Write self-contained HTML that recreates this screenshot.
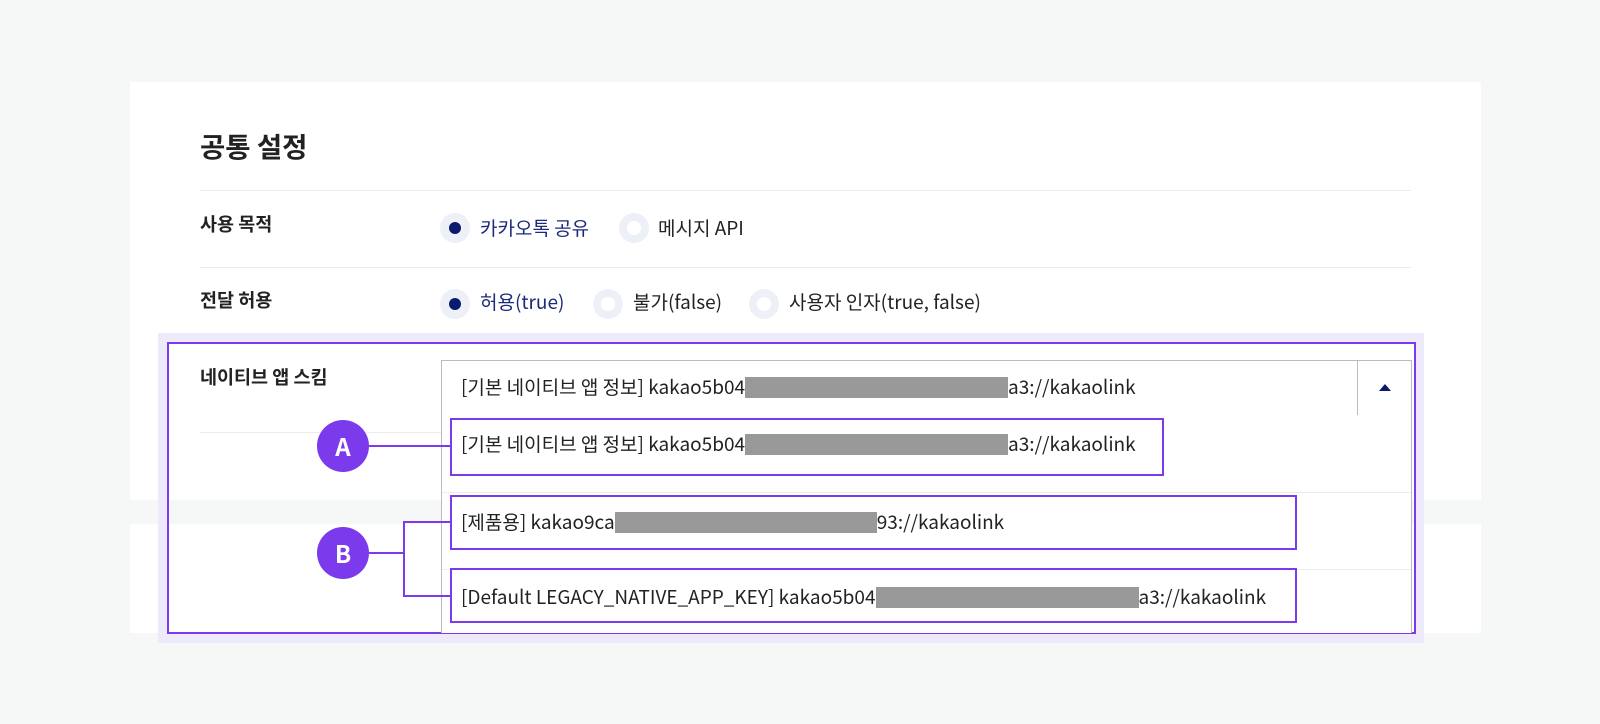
<!DOCTYPE html>
<html><head><meta charset="utf-8"><style>
*{margin:0;padding:0;box-sizing:border-box}
body{width:1600px;height:724px;background:#f6f7f7;position:relative;overflow:hidden;font-family:"Noto Sans CJK KR","Liberation Sans",sans-serif;color:#222}
.a{position:absolute}
.t{font-size:19px;white-space:nowrap;line-height:22px}
.g{display:inline-block;background:#999;height:21px;vertical-align:-4px}
.rad{position:absolute;width:30px;height:30px;border-radius:50%;background:#eef0f8}
.rad.on::after{content:"";position:absolute;left:9px;top:9px;width:12px;height:12px;border-radius:50%;background:#0c1a6b}
.rad:not(.on)::after{content:"";position:absolute;left:8px;top:8px;width:14px;height:14px;border-radius:50%;background:#fff}
.lbl{font-size:18.5px;font-weight:bold;line-height:22px}
.hl{height:1px;background:#ececec}
.pb{border:2px solid #7c3aed}
.circ{width:52px;height:52px;border-radius:50%;background:#7c3aed;color:#fff;font-weight:bold;font-size:24px;text-align:center;line-height:52px}
.ln{background:#7c3aed}
</style></head><body>
<div class="a" style="left:130px;top:82px;width:1351px;height:418px;background:#fff"></div>
<div class="a" style="left:130px;top:524px;width:1351px;height:109px;background:#fff"></div>
<div class="a" style="left:200px;top:128px;font-size:27.5px;font-weight:bold;line-height:34px">공통 설정</div>
<div class="a hl" style="left:200px;top:190px;width:1211px"></div>
<div class="a lbl" style="left:200px;top:213px">사용 목적</div>
<div class="rad on" style="left:440px;top:213px"></div>
<div class="a t" style="left:480px;top:217px;color:#1c2a7a">카카오톡 공유</div>
<div class="rad" style="left:619px;top:213px"></div>
<div class="a t" style="left:658px;top:217px">메시지 API</div>
<div class="a hl" style="left:200px;top:267px;width:1211px"></div>
<div class="a lbl" style="left:200px;top:289px">전달 허용</div>
<div class="rad on" style="left:440px;top:289px"></div>
<div class="a t" style="left:480px;top:291px;color:#1c2a7a">허용(true)</div>
<div class="rad" style="left:593px;top:289px"></div>
<div class="a t" style="left:633px;top:291px">불가(false)</div>
<div class="rad" style="left:749px;top:289px"></div>
<div class="a t" style="left:789px;top:291px">사용자 인자(true, false)</div>

<div class="a" style="left:158px;top:333px;width:1266px;height:310px;border:10px solid #efe9fc"></div>
<div class="a pb" style="left:167px;top:342px;width:1249px;height:292px"></div>
<div class="a lbl" style="left:200px;top:366px">네이티브 앱 스킴</div>
<div class="a hl" style="left:200px;top:432px;width:241px"></div>
<div class="a" style="left:441px;top:360px;width:971px;height:56px;border:1px solid #bbb;background:#fff"></div>
<div class="a" style="left:1357px;top:360px;width:1px;height:56px;background:#bbb"></div>
<div class="a" style="left:1379px;top:384px;width:0;height:0;border-left:6px solid transparent;border-right:6px solid transparent;border-bottom:7px solid #0c1a6b"></div>
<div class="a t" style="left:461px;top:376px">[기본 네이티브 앱 정보] kakao5b04<span class="g" style="width:263px"></span>a3://kakaolink</div>
<div class="a" style="left:441px;top:415px;width:971px;height:218px;border-left:1px solid #bbb;border-right:1px solid #bbb;background:#fff"></div>
<div class="a hl" style="left:442px;top:492px;width:969px"></div>
<div class="a hl" style="left:442px;top:569px;width:969px"></div>
<div class="a pb" style="left:450px;top:418px;width:714px;height:58px"></div>
<div class="a t" style="left:461px;top:433px">[기본 네이티브 앱 정보] kakao5b04<span class="g" style="width:263px"></span>a3://kakaolink</div>
<div class="a pb" style="left:450px;top:495px;width:847px;height:55px"></div>
<div class="a t" style="left:461px;top:511px">[제품용] kakao9ca<span class="g" style="width:262px"></span>93://kakaolink</div>
<div class="a pb" style="left:450px;top:568px;width:847px;height:55px"></div>
<div class="a t" style="left:461px;top:586px">[Default LEGACY_NATIVE_APP_KEY] kakao5b04<span class="g" style="width:263px"></span>a3://kakaolink</div>
<div class="a circ" style="left:317px;top:420px">A</div>
<div class="a ln" style="left:369px;top:445px;width:81px;height:2px"></div>
<div class="a circ" style="left:317px;top:527px">B</div>
<div class="a ln" style="left:369px;top:552px;width:36px;height:2px"></div>
<div class="a ln" style="left:403px;top:521px;width:2px;height:76px"></div>
<div class="a ln" style="left:403px;top:521px;width:47px;height:2px"></div>
<div class="a ln" style="left:403px;top:595px;width:47px;height:2px"></div>
</body></html>
